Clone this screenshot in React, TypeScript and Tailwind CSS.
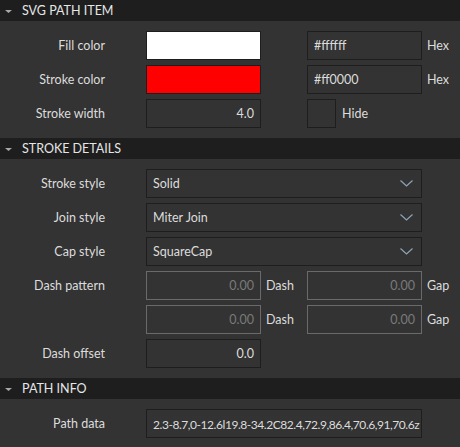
const font = { fontFamily: '"Segoe UI", Lato, "Noto Sans", sans-serif' };

const SectionHeader = ({ title }: { title: string }) => (
  <div className="flex h-[21px] items-center bg-[#1e1e1e] text-[12.5px] text-[#e6e6e6]">
    <svg width="22" height="21" viewBox="0 0 22 21" className="shrink-0">
      <path d="M5 10h7l-3.5 3z" fill="#a8a8a8" />
    </svg>
    <span className="pt-[2px]">{title}</span>
  </div>
);

const Label = ({ text }: { text: string }) => (
  <div className="w-[105px] shrink-0 pt-[2px] text-right">{text}</div>
);

const Box = ({
  className,
  children,
}: {
  className?: string;
  children?: React.ReactNode;
}) => (
  <div
    className={`flex h-[29px] items-center border border-[#1e1e1e] bg-[#333333] px-[6px] pt-[2px] ${className ?? ""}`}
  >
    {children}
  </div>
);

const Chevron = () => (
  <svg width="13" height="7" viewBox="0 0 13 7" className="mb-[2px] ml-auto mr-[2px]">
    <path d="M0.5 0.5l6 5.5 6-5.5" fill="none" stroke="#8fa3b8" strokeWidth="1.2" />
  </svg>
);

const Select = ({ value }: { value: string }) => (
  <Box className="w-[276px]">
    <span>{value}</span>
    <Chevron />
  </Box>
);

const DashBox = () => (
  <div className="flex h-[29px] w-[115px] items-center justify-end border border-[#6a6a6a] px-[6px] pt-[2px] text-[#7a7a7a]">
    0.00
  </div>
);

const Side = ({ text, className }: { text: string; className?: string }) => (
  <span className={`pt-[2px] ${className ?? ""}`}>{text}</span>
);

const Row = ({ label, children }: { label: string; children: React.ReactNode }) => (
  <div className="flex h-[29px] items-center">
    <Label text={label} />
    <div className="ml-[41px] flex items-center">{children}</div>
  </div>
);

export default function App() {
  return (
    <div
      className="h-[447px] w-[460px] overflow-hidden bg-[#333333] text-[12.5px] text-[#dcdcdc]"
      style={font}
    >
      <SectionHeader title="SVG PATH ITEM" />
      <div className="flex flex-col gap-[5px] py-[10px]">
        <Row label="Fill color">
          <div className="h-[29px] w-[115px] border border-[#1e1e1e] bg-white" />
          <Box className="ml-[46px] w-[115px]">#ffffff</Box>
          <Side text="Hex" className="ml-[5px]" />
        </Row>
        <Row label="Stroke color">
          <div className="h-[29px] w-[115px] border border-[#1e1e1e] bg-[#ff0000]" />
          <Box className="ml-[46px] w-[115px]">#ff0000</Box>
          <Side text="Hex" className="ml-[5px]" />
        </Row>
        <Row label="Stroke width">
          <Box className="w-[115px] justify-end">4.0</Box>
          <Box className="ml-[46px] w-[29px]" />
          <Side text="Hide" className="ml-[6px]" />
        </Row>
      </div>

      <SectionHeader title="STROKE DETAILS" />
      <div className="flex flex-col gap-[5px] py-[10px]">
        <Row label="Stroke style">
          <Select value="Solid" />
        </Row>
        <Row label="Join style">
          <Select value="Miter Join" />
        </Row>
        <Row label="Cap style">
          <Select value="SquareCap" />
        </Row>
        <Row label="Dash pattern">
          <DashBox />
          <Side text="Dash" className="ml-[5px] w-[41px]" />
          <DashBox />
          <Side text="Gap" className="ml-[5px]" />
        </Row>
        <Row label="">
          <DashBox />
          <Side text="Dash" className="ml-[5px] w-[41px]" />
          <DashBox />
          <Side text="Gap" className="ml-[5px]" />
        </Row>
        <Row label="Dash offset">
          <Box className="w-[115px] justify-end">0.0</Box>
        </Row>
      </div>

      <SectionHeader title="PATH INFO" />
      <div className="py-[10px]">
        <Row label="Path data">
          <Box className="w-[276px] overflow-hidden whitespace-nowrap">
            <span className="shrink-0 text-[12px] tracking-[-0.45px]">
              2.3-8.7,0-12.6l19.8-34.2C82.4,72.9,86.4,70.6,91,70.6z
            </span>
          </Box>
        </Row>
      </div>
    </div>
  );
}
